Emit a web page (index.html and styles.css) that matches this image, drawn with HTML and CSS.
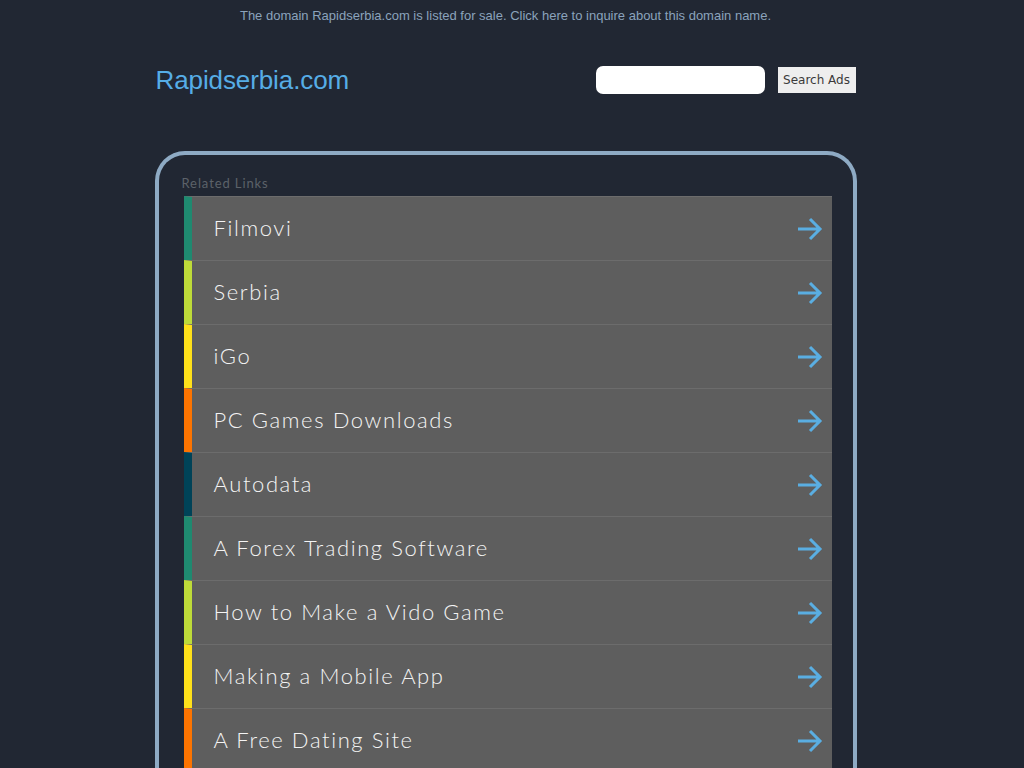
FILE: index.html
```html
<!DOCTYPE html>
<html>
<head>
<meta charset="utf-8">
<title>Rapidserbia.com</title>
<link rel="stylesheet" href="styles.css">
</head>
<body>
<div class="topbar"><a href="#">The domain Rapidserbia.com is listed for sale. Click here to inquire about this domain name.</a></div>
<div class="wrap">
  <header class="header">
    <a class="logo" href="#">Rapidserbia.com</a>
    <form class="search">
      <input class="search-input" type="text">
      <button class="search-btn" type="button">Search Ads</button>
    </form>
  </header>
  <section class="box">
    <div class="label">Related Links</div>
    <ul class="links">
      <li class="row c1"><span class="txt">Filmovi</span><svg class="arr" viewBox="0 0 26 24"><path d="M1 12H23M13 2L23 12L13 22" fill="none" stroke="currentColor" stroke-width="3"/></svg></li>
      <li class="row c2"><span class="txt">Serbia</span><svg class="arr" viewBox="0 0 26 24"><path d="M1 12H23M13 2L23 12L13 22" fill="none" stroke="currentColor" stroke-width="3"/></svg></li>
      <li class="row c3"><span class="txt">iGo</span><svg class="arr" viewBox="0 0 26 24"><path d="M1 12H23M13 2L23 12L13 22" fill="none" stroke="currentColor" stroke-width="3"/></svg></li>
      <li class="row c4"><span class="txt">PC Games Downloads</span><svg class="arr" viewBox="0 0 26 24"><path d="M1 12H23M13 2L23 12L13 22" fill="none" stroke="currentColor" stroke-width="3"/></svg></li>
      <li class="row c5"><span class="txt">Autodata</span><svg class="arr" viewBox="0 0 26 24"><path d="M1 12H23M13 2L23 12L13 22" fill="none" stroke="currentColor" stroke-width="3"/></svg></li>
      <li class="row c1"><span class="txt">A Forex Trading Software</span><svg class="arr" viewBox="0 0 26 24"><path d="M1 12H23M13 2L23 12L13 22" fill="none" stroke="currentColor" stroke-width="3"/></svg></li>
      <li class="row c2"><span class="txt">How to Make a Vido Game</span><svg class="arr" viewBox="0 0 26 24"><path d="M1 12H23M13 2L23 12L13 22" fill="none" stroke="currentColor" stroke-width="3"/></svg></li>
      <li class="row c3"><span class="txt">Making a Mobile App</span><svg class="arr" viewBox="0 0 26 24"><path d="M1 12H23M13 2L23 12L13 22" fill="none" stroke="currentColor" stroke-width="3"/></svg></li>
      <li class="row c4"><span class="txt">A Free Dating Site</span><svg class="arr" viewBox="0 0 26 24"><path d="M1 12H23M13 2L23 12L13 22" fill="none" stroke="currentColor" stroke-width="3"/></svg></li>
    </ul>
  </section>
</div>
</body>
</html>
```
FILE: styles.css
```css
html, body {
  margin: 0;
  padding: 0;
  background: #212733;
}
body {
  font-family: "Liberation Sans", Arial, sans-serif;
  padding-right: 13px;
  height: 768px;
  overflow: hidden;
}
.topbar {
  text-align: center;
  padding-top: 7px;
  height: 20px;
  font-size: 13px;
  line-height: 17px;
}
.topbar a {
  color: #8ba3bc;
  text-decoration: none;
}
.wrap {
  width: 702px;
  margin: 0 auto;
}
.header {
  display: flex;
  align-items: center;
  justify-content: space-between;
  height: 106px;
  padding-left: 1px;
  padding-right: 1px;
  margin-bottom: 18px;
}
.logo {
  color: #56ade6;
  font-size: 26px;
  text-decoration: none;
  letter-spacing: -0.1px;
}
.search {
  display: flex;
  align-items: center;
  gap: 13px;
  margin: 0;
}
.search-input {
  width: 169px;
  height: 28px;
  box-sizing: border-box;
  border: none;
  border-radius: 7px;
  background: #fff;
  padding: 0;
}
.search-btn {
  width: 78px;
  height: 26px;
  border: none;
  border-radius: 0;
  background: #eeeeee;
  color: #3a3a3a;
  font-family: "DejaVu Sans", sans-serif;
  font-size: 12px;
  padding: 0;
}
.box {
  border: 4px solid #8eaac4;
  border-bottom: none;
  border-radius: 30px 30px 0 0;
  padding: 20px 21px 0 25px;
  height: 700px;
}
.label {
  font-family: "Lato", sans-serif;
  font-weight: 400;
  color: #5c6269;
  font-size: 13px;
  letter-spacing: 0.9px;
  line-height: 16px;
  margin-left: -2px;
  margin-bottom: 5px;
}
.links {
  list-style: none;
  margin: 0;
  padding: 0;
}
.row {
  display: flex;
  align-items: center;
  justify-content: space-between;
  height: 64px;
  box-sizing: border-box;
  background: #5e5e5e;
  border-top: 1px solid #6c6c6c;
  border-left: 8px solid #1f8a70;
  padding: 0 9px 0 22px;
}
.c1 { border-left-color: #1f8a70; }
.c2 { border-left-color: #bedb39; }
.c3 { border-left-color: #ffe11a; }
.c4 { border-left-color: #fd7400; }
.c5 { border-left-color: #004358; }
.txt {
  font-family: "Lato", sans-serif;
  font-weight: 300;
  color: #f4f4f4;
  font-size: 22px;
  letter-spacing: 1.6px;
  padding-bottom: 2px;
}
.arr {
  width: 26px;
  height: 24px;
  color: #5aaee2;
}
```
